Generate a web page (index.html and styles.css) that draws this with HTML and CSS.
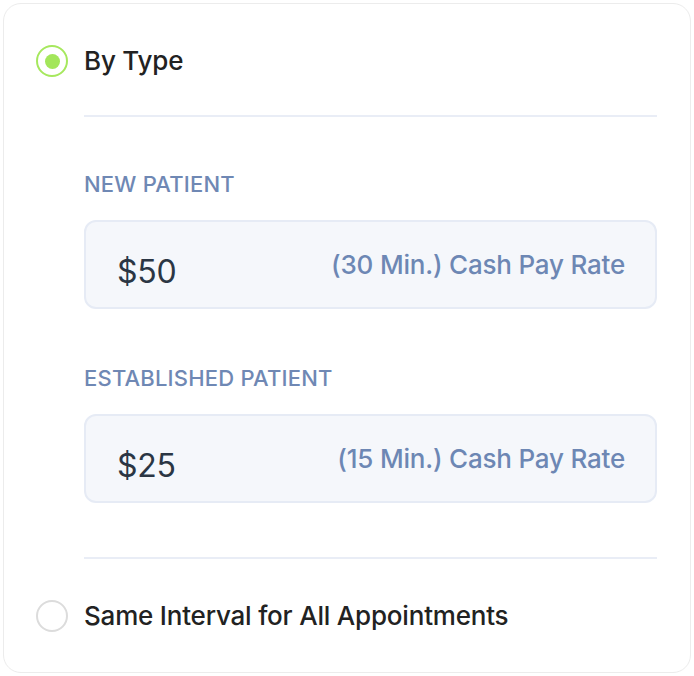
FILE: index.html
```html
<!DOCTYPE html>
<html>
<head>
<meta charset="utf-8">
<link rel="stylesheet" href="styles.css">
</head>
<body>
<div class="card">
  <div class="option">
    <span class="radio radio-on"><span class="dot"></span></span>
    <span class="option-label">By Type</span>
  </div>
  <div class="section">
    <div class="divider"></div>
    <div class="field-label first">NEW PATIENT</div>
    <div class="field">
      <span class="amount">$50</span>
      <span class="hint">(30 Min.) Cash Pay Rate</span>
    </div>
    <div class="field-label">ESTABLISHED PATIENT</div>
    <div class="field">
      <span class="amount">$25</span>
      <span class="hint">(15 Min.) Cash Pay Rate</span>
    </div>
    <div class="divider last"></div>
  </div>
  <div class="option">
    <span class="radio"></span>
    <span class="option-label">Same Interval for All Appointments</span>
  </div>
</div>
</body>
</html>
```

FILE: styles.css
```css
* { box-sizing: border-box; }
html, body { margin: 0; padding: 0; background: #ffffff; }
body {
  font-family: Inter, "Noto Sans", sans-serif;
  width: 694px;
  height: 676px;
}
.card {
  margin: 3px;
  width: 688px;
  height: 670px;
  border: 1px solid #ececec;
  border-radius: 18px;
  padding: 41px 33px 0 32px;
  background: #fff;
}
.option {
  display: flex;
  align-items: center;
  gap: 16px;
  height: 32px;
}
.radio {
  width: 32px;
  height: 32px;
  border-radius: 50%;
  border: 2px solid #dcdcdc;
  display: flex;
  align-items: center;
  justify-content: center;
  flex: none;
}
.radio-on { border-color: #a6e85e; }
.dot {
  width: 15px;
  height: 15px;
  border-radius: 50%;
  background: #a3e65a;
}
.option-label {
  font-size: 26px;
  line-height: 32px;
  font-weight: 500;
  color: #222222;
  letter-spacing: -0.2px;
}
.section {
  margin-left: 48px;
  padding-top: 38px;
  padding-bottom: 41px;
}
.divider {
  height: 2px;
  background: #e9edf6;
}
.field-label {
  font-size: 22px;
  line-height: 24px;
  font-weight: 500;
  color: #6f88b4;
  margin-top: 57px;
  margin-bottom: 24px;
  letter-spacing: 0.2px;
}
.field-label.first { margin-top: 55px; }
.field {
  height: 89px;
  border: 2px solid #e6ebf5;
  border-radius: 12px;
  background: #f5f7fb;
  display: flex;
  align-items: center;
  justify-content: space-between;
  padding: 0 30px 0 31px;
}
.amount {
  font-size: 32px;
  color: #2b3644;
  padding-top: 14px;
  letter-spacing: -0.3px;
}
.hint {
  font-size: 26px;
  font-weight: 500;
  color: #6d87b4;
  letter-spacing: -0.2px;
}
.divider.last { margin-top: 54px; }
```
